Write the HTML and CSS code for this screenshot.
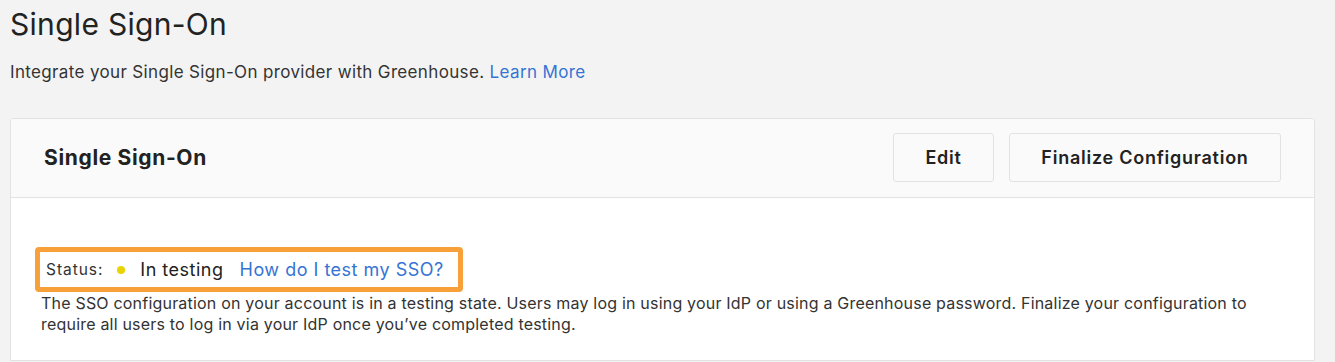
FILE: index.html
```html
<!DOCTYPE html>
<html>
<head>
  <meta name="viewport" content="width=device-width, initial-scale=1.0">
  <title>Single Sign-On</title>
  <link rel="stylesheet" href="styles.css">
</head>
<body>
  <div class="page-header">
    <h1>Single Sign-On</h1>
    <p class="intro">Integrate your Single Sign-On provider with Greenhouse. <a href="#">Learn More</a></p>
  </div>

  <div class="card">
    <div class="card-header">
      <h2>Single Sign-On</h2>
      <div class="actions">
        <button class="btn btn-edit">Edit</button>
        <button class="btn btn-finalize">Finalize Configuration</button>
      </div>
    </div>
    <div class="card-body">
      <div class="status-box">
        <span class="status-label">Status:</span>
        <span class="status-dot"></span>
        <span class="status-value">In testing</span>
        <a href="#" class="status-link">How do I test my SSO?</a>
      </div>
      <p class="status-text">The SSO configuration on your account is in a testing state. Users may log in using your IdP or using a Greenhouse password. Finalize your configuration to require all users to log in via your IdP once you’ve completed testing.</p>
    </div>
  </div>
</body>
</html>
```

FILE: styles.css
```css
body {
  font-family: Inter, "Liberation Sans", Arial, sans-serif;
  background-color: #f3f3f3;
  color: #222;
  margin: 0;
  padding: 0 20px 0 10px;
}

a {
  color: #3574d4;
  text-decoration: none;
}

.page-header h1 {
  font-size: 30px;
  font-weight: normal;
  margin: 0;
  padding-top: 6px;
  line-height: 36px;
  letter-spacing: 0.3px;
}

.intro {
  font-size: 17px;
  margin: 19px 0 0;
  line-height: 22px;
  color: #333;
  letter-spacing: 0.35px;
}

.card {
  margin-top: 35px;
  border: 1px solid #e2e2e2;
  border-radius: 4px 4px 0 0;
  background-color: #fff;
  overflow: hidden;
}

.card-header {
  display: flex;
  align-items: center;
  justify-content: space-between;
  background-color: #fafafa;
  border-bottom: 1px solid #e2e2e2;
  padding: 14px 33px 15px 33px;
}

.card-header h2 {
  font-size: 21px;
  font-weight: 700;
  margin: 0;
  letter-spacing: 0.65px;
}

.actions {
  display: flex;
  gap: 15px;
}

.btn {
  font-family: inherit;
  font-size: 18px;
  font-weight: 600;
  letter-spacing: 0.75px;
  color: #222;
  background-color: #fafafa;
  border: 1px solid #e2e2e2;
  border-radius: 3px;
  height: 49px;
}

.btn-edit {
  width: 101px;
}

.btn-finalize {
  width: 272px;
}

.card-body {
  padding: 49px 30px 25px 30px;
}

.status-box {
  display: inline-flex;
  align-items: center;
  height: 35px;
  padding: 0 14px 0 6px;
  margin-left: -6px;
  border: 5px solid #f8a13a;
  border-radius: 4px;
}

.status-label {
  font-size: 15.5px;
  letter-spacing: 0.95px;
  color: #333;
}

.status-dot {
  width: 8px;
  height: 8px;
  border-radius: 50%;
  background-color: #e8d400;
  margin: 0 15px 0 14px;
}

.status-value {
  font-size: 18px;
  letter-spacing: 0.5px;
  margin-right: 16px;
}

.status-link {
  font-size: 18px;
  letter-spacing: 0.5px;
}

.status-text {
  font-size: 16px;
  line-height: 21px;
  letter-spacing: 0.2px;
  color: #333;
  margin: 0;
  padding-top: 1px;
}
```
